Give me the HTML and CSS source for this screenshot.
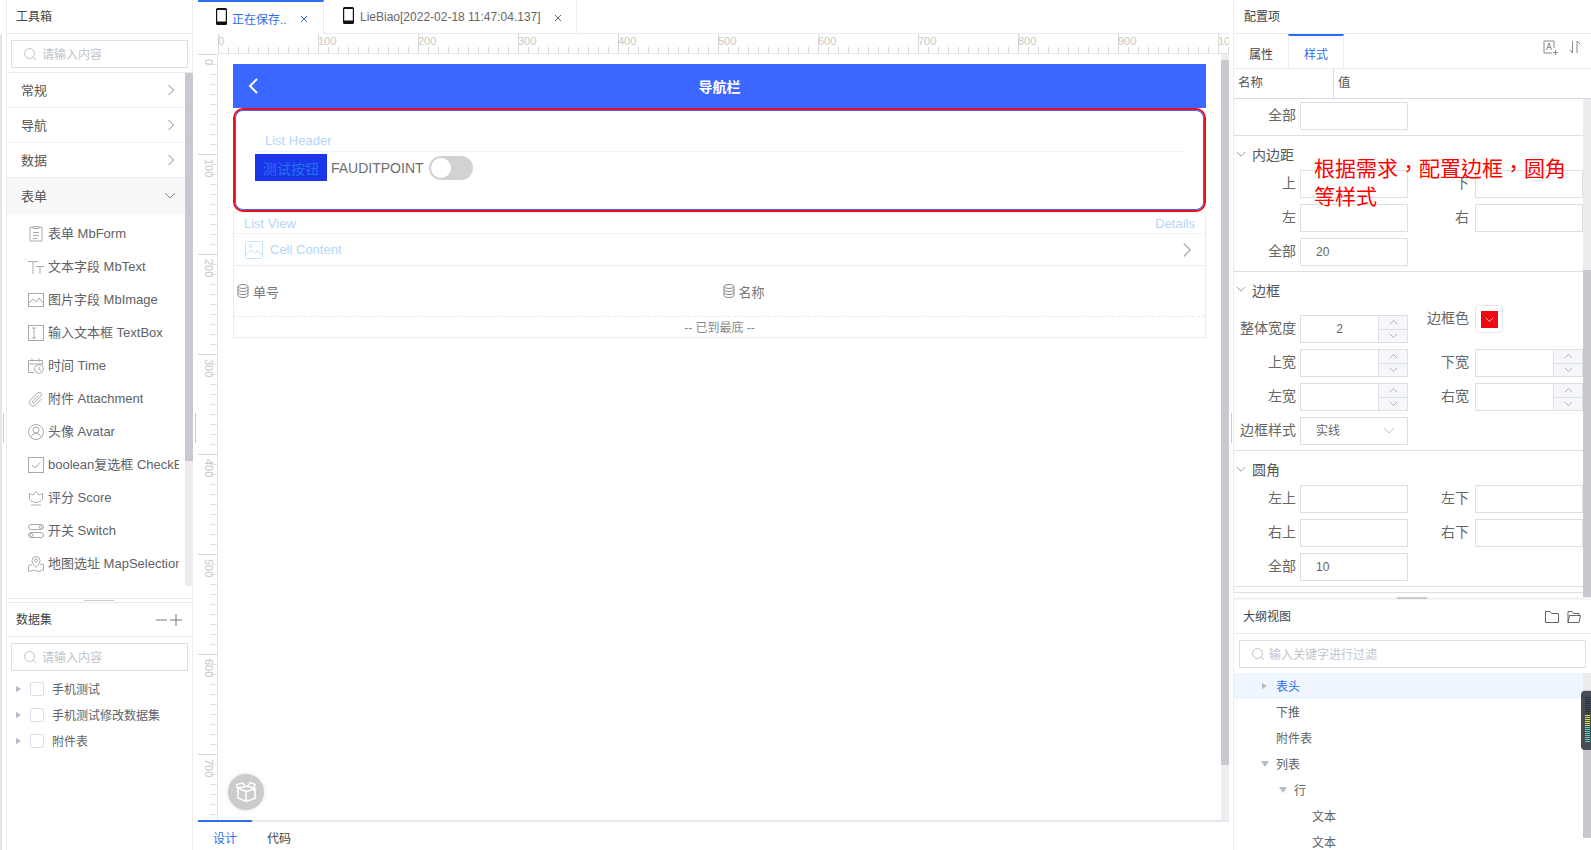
FILE: index.html
```html
<!DOCTYPE html>
<html lang="zh-CN">
<head>
<meta charset="utf-8">
<title>设计器</title>
<link rel="stylesheet" href="styles.css">
</head>
<body>
<svg class="defs" width="0" height="0" aria-hidden="true">
  <symbol id="chev-r" viewBox="0 0 10 14"><path d="M2.500 2l5 5-5 5" fill="none" stroke="currentColor"/></symbol>
  <symbol id="chev-d" viewBox="0 0 12 8"><path d="M1 1l5 5 5-5" fill="none" stroke="currentColor"/></symbol>
  <symbol id="chev-u" viewBox="0 0 12 8"><path d="M1 7l5-5 5 5" fill="none" stroke="currentColor"/></symbol>
  <symbol id="search" viewBox="0 0 14 14"><circle cx="6.500" cy="6.500" r="5" fill="none" stroke="currentColor"/><path d="M10 10l3 3" stroke="currentColor"/></symbol>
  <symbol id="phone" viewBox="0 0 11 17"><path d="M1.500 0h8A1.500 1.500 0 0 1 11 1.500v14A1.500 1.500 0 0 1 9.500 17h-8A1.500 1.500 0 0 1 0 15.500v-14A1.500 1.500 0 0 1 1.500 0zM1.200 2v11.500h8.600V2z" fill="#111" fill-rule="evenodd"/></symbol>
  <symbol id="close" viewBox="0 0 8 8"><path d="M1 1l6 6M7 1l-6 6" stroke="currentColor"/></symbol>
  <symbol id="db" viewBox="0 0 12 14"><g fill="none" stroke="currentColor"><ellipse cx="6" cy="2.500" rx="5" ry="2"/><path d="M1 2.500v9c0 1.100 2.200 2 5 2s5-.9 5-2v-9M1 5.500c0 1.100 2.200 2 5 2s5-.9 5-2M1 8.500c0 1.100 2.200 2 5 2s5-.9 5-2"/></g></symbol>
  <symbol id="i-form" viewBox="0 0 16 16"><g fill="none" stroke="currentColor"><path d="M5 1.500H2v13.500h12V1.500h-3M5 .5h6v2H5z"/><path d="M5 6.500h6M5 9.500h6M5 12.500h4"/></g></symbol>
  <symbol id="i-text" viewBox="0 0 16 16"><g fill="none" stroke="currentColor"><path d="M0 2.500h10M5 2.500V15M8 7.500h8M12 7.500V15"/></g></symbol>
  <symbol id="i-image" viewBox="0 0 16 16"><g fill="none" stroke="currentColor"><rect x=".5" y="1.500" width="15" height="13"/><path d="M1 11l4-4 3 3 3-4 4 5"/></g></symbol>
  <symbol id="i-box" viewBox="0 0 16 16"><g fill="none" stroke="currentColor"><rect x=".5" y=".5" width="15" height="15"/><path d="M4 3h4M4 13h4M6 3v10"/></g></symbol>
  <symbol id="i-time" viewBox="0 0 16 16"><g fill="none" stroke="currentColor"><path d="M6 14.500H.5v-12h14v4M.5 6h14M4 .5v3M11 .5v3"/><circle cx="11" cy="11" r="4.300"/><path d="M11 8.500V11l2 1.500"/></g></symbol>
  <symbol id="i-clip" viewBox="0 0 16 16"><path d="M14 7.500l-6.500 6.500a3.500 3.500 0 0 1-5-5L9.500 2a2.300 2.300 0 0 1 3.300 3.300L6 12a1.100 1.100 0 0 1-1.600-1.600L10.500 4.500" fill="none" stroke="currentColor"/></symbol>
  <symbol id="i-avatar" viewBox="0 0 16 16"><g fill="none" stroke="currentColor"><circle cx="8" cy="8" r="7.500"/><circle cx="8" cy="6" r="3"/><path d="M2.800 13.200c1-2.500 3-3.700 5.200-3.700s4.200 1.200 5.200 3.700"/></g></symbol>
  <symbol id="i-check" viewBox="0 0 16 16"><g fill="none" stroke="currentColor"><rect x=".5" y=".5" width="15" height="15"/><path d="M4 8l3 3 5-5.500"/></g></symbol>
  <symbol id="i-score" viewBox="0 0 16 16"><g fill="none" stroke="currentColor"><path d="M1.500 3.500L5 5l3-3.500L11 5l3.500-1.500v4.500c0 2.500-3 4-6.500 4.500C4.500 12 1.500 10.500 1.500 8zM3 15h10"/></g></symbol>
  <symbol id="i-switch" viewBox="0 0 16 16"><g fill="none" stroke="currentColor"><rect x=".5" y="1.500" width="15" height="5" rx="2.500"/><circle cx="12.500" cy="4" r="1.500"/><rect x=".5" y="9.500" width="15" height="5" rx="2.500"/><circle cx="3.500" cy="12" r="1.500"/></g></symbol>
  <symbol id="i-map" viewBox="0 0 16 16"><g fill="none" stroke="currentColor"><path d="M8 11.500S4 7.800 4 4.500a4 4 0 0 1 8 0c0 3.300-4 7-4 7z"/><circle cx="8" cy="4.500" r="1.500"/><path d="M4 8.500L.5 10v5.500l5-1.500 5 1.500 5-1.500V8.500L12 8"/></g></symbol>
  <symbol id="tri-r" viewBox="0 0 6 8"><path d="M0 0l6 4-6 4z" fill="currentColor"/></symbol>
  <symbol id="tri-d" viewBox="0 0 8 6"><path d="M0 0h8L4 6z" fill="currentColor"/></symbol>
  <symbol id="folder" viewBox="0 0 14 12"><path d="M.5 11.500V.5h4.500l1.500 2h7v9z" fill="none" stroke="currentColor"/></symbol>
  <symbol id="folder-open" viewBox="0 0 14 12"><path d="M1 11.500V.5h4l1.500 2h5.500v2M1 11.500l1.500-7h11l-1.500 7z" fill="none" stroke="currentColor"/></symbol>
</svg>

<div class="app">
  <aside class="left">
    <section class="left-top">
      <header class="pane-head">工具箱</header>
      <div class="search-wrap left-search">
        <div class="search"><svg class="search-ico"><use href="#search"/></svg><span>请输入内容</span></div>
      </div>
      <div class="tool-scroll">
        <div class="tool-list">
          <div class="acc-row"><span>常规</span><svg class="acc-ico"><use href="#chev-r"/></svg></div>
          <div class="acc-row"><span>导航</span><svg class="acc-ico"><use href="#chev-r"/></svg></div>
          <div class="acc-row"><span>数据</span><svg class="acc-ico"><use href="#chev-r"/></svg></div>
          <div class="acc-row acc-open"><span>表单</span><svg class="acc-ico-d"><use href="#chev-d"/></svg></div>
          <div class="tools">
            <div class="tool"><svg class="tool-ico"><use href="#i-form"/></svg><span>表单 MbForm</span></div>
            <div class="tool"><svg class="tool-ico"><use href="#i-text"/></svg><span>文本字段 MbText</span></div>
            <div class="tool"><svg class="tool-ico"><use href="#i-image"/></svg><span>图片字段 MbImage</span></div>
            <div class="tool"><svg class="tool-ico"><use href="#i-box"/></svg><span>输入文本框 TextBox</span></div>
            <div class="tool"><svg class="tool-ico"><use href="#i-time"/></svg><span>时间 Time</span></div>
            <div class="tool"><svg class="tool-ico"><use href="#i-clip"/></svg><span>附件 Attachment</span></div>
            <div class="tool"><svg class="tool-ico"><use href="#i-avatar"/></svg><span>头像 Avatar</span></div>
            <div class="tool"><svg class="tool-ico"><use href="#i-check"/></svg><span>boolean复选框 CheckBox</span></div>
            <div class="tool"><svg class="tool-ico"><use href="#i-score"/></svg><span>评分 Score</span></div>
            <div class="tool"><svg class="tool-ico"><use href="#i-switch"/></svg><span>开关 Switch</span></div>
            <div class="tool"><svg class="tool-ico"><use href="#i-map"/></svg><span>地图选址 MapSelection</span></div>
          </div>
        </div>
        <div class="scrollbar tool-bar"><div class="thumb"></div></div>
      </div>
    </section>
    <div class="splitter"><i></i></div>
    <section class="left-bottom">
      <header class="pane-head data-head"><span>数据集</span><span class="minus-plus"><svg width="26" height="14" viewBox="0 0 26 14"><path d="M0 7h11M14 7h12M20 1v12" stroke="#777" fill="none"/></svg></span></header>
      <div class="search-wrap left-search2">
        <div class="search"><svg class="search-ico"><use href="#search"/></svg><span>请输入内容</span></div>
      </div>
      <ul class="data-tree">
        <li><svg class="tri"><use href="#tri-r"/></svg><i class="cb"></i><span>手机测试</span></li>
        <li><svg class="tri"><use href="#tri-r"/></svg><i class="cb"></i><span>手机测试修改数据集</span></li>
        <li><svg class="tri"><use href="#tri-r"/></svg><i class="cb"></i><span>附件表</span></li>
      </ul>
    </section>
  </aside>

  <main class="center">
    <div class="tabs">
      <div class="tab tab-active"><svg class="phone"><use href="#phone"/></svg><span class="tab-name">正在保存..</span><svg class="tab-x"><use href="#close"/></svg></div>
      <div class="tab tab-two"><svg class="phone"><use href="#phone"/></svg><span class="tab-name">LieBiao[2022-02-18 11:47:04.137]</span><svg class="tab-x"><use href="#close"/></svg></div>
    </div>
    <div class="hruler">
      <span>0</span><span>100</span><span>200</span><span>300</span><span>400</span><span>500</span><span>600</span><span>700</span><span>800</span><span>900</span><span>1000</span>
    </div>
    <div class="stage">
      <div class="vruler">
        <span>0</span><span>100</span><span>200</span><span>300</span><span>400</span><span>500</span><span>600</span><span>700</span>
      </div>
      <div class="canvas">
        <div class="phone-page">
          <div class="navbar">
            <svg class="back" viewBox="0 0 12 18"><path d="M10 2L3 9l7 7" fill="none" stroke="#fff" stroke-width="2"/></svg>
            <b>导航栏</b>
          </div>
          <div class="red-box">
            <div class="list-header">List Header</div>
            <div class="cell-row">
              <button class="test-btn">测试按钮</button>
              <span class="field-name">FAUDITPOINT</span>
              <span class="toggle"><i></i></span>
            </div>
          </div>
          <div class="list-view">
            <div class="lv-head"><span>List View</span><span>Details</span></div>
            <div class="lv-cell">
              <svg class="cell-ico" viewBox="0 0 18 18"><g fill="none" stroke="#c6e1fb"><rect x=".5" y=".5" width="17" height="17" rx="1"/><circle cx="5.500" cy="5" r="1.500"/><path d="M1 14l5-5 4 3 3-2 4 4"/></g></svg>
              <span class="cell-text">Cell Content</span>
              <svg class="cell-chev"><use href="#chev-r"/></svg>
            </div>
            <div class="lv-table">
              <div class="th"><svg class="db"><use href="#db"/></svg><span>单号</span></div>
              <div class="th"><svg class="db"><use href="#db"/></svg><span>名称</span></div>
            </div>
            <div class="lv-end">-- 已到最底 --</div>
          </div>
        </div>
        <button class="fab" aria-label="组件">
          <svg viewBox="0 0 24 24" width="24" height="24"><g fill="none" stroke="#fff" stroke-width="1.500"><path d="M4 8l10-2 7 3-9 2.500z"/><path d="M4 8v10l8 3.500 9-3V9M12 11.500v10"/><path d="M14 6l2-3.500 5 2-1 3.500M4 8L2.500 4.500 9 3l2 3.500"/></g></svg>
        </button>
      </div>
      <div class="scrollbar stage-bar"><div class="thumb"></div></div>
    </div>
    <div class="bottom-tabs">
      <div class="btab btab-active">设计</div>
      <div class="btab">代码</div>
    </div>
  </main>

  <aside class="right">
    <section class="props">
      <header class="pane-head right-head">配置项</header>
      <div class="prop-tabs">
        <div class="ptab">属性</div>
        <div class="ptab ptab-active">样式</div>
        <div class="ptab-tools">
          <svg width="16" height="16" viewBox="0 0 16 16"><g fill="none" stroke="#8a8a8a"><path d="M9 13H1V1h10v7"/><path d="M3.500 10l2.500-7 2.500 7M4.500 7.500h3M12.500 10v5M10 12.500h5"/></g></svg>
          <svg width="12" height="14" viewBox="0 0 12 14"><path d="M3.500 1v12L1 10M8 13V1l3 3" fill="none" stroke="#8a8a8a"/></svg>
        </div>
      </div>
      <div class="prop-head"><div class="ph-name">名称</div><div class="ph-val">值</div></div>
      <div class="prop-scroll">
        <div class="prop-body">
          <div class="sec sec-first">
            <div class="grid">
              <label>全部</label><div class="inp"></div>
            </div>
          </div>
          <div class="sec">
            <div class="sec-head"><svg class="sec-ico"><use href="#chev-d"/></svg>内边距</div>
            <div class="grid">
              <label>上</label><div class="inp"></div><label class="l2">下</label><div class="inp"></div>
              <label>左</label><div class="inp"></div><label class="l2">右</label><div class="inp"></div>
              <label>全部</label><div class="inp">20</div>
            </div>
          </div>
          <div class="sec">
            <div class="sec-head sec-head-tight"><svg class="sec-ico"><use href="#chev-d"/></svg>边框</div>
            <div class="grid">
              <label class="low">整体宽度</label>
              <div class="inp num low"><span class="num-val">2</span><span class="step"><i><svg><use href="#chev-u"/></svg></i><i><svg><use href="#chev-d"/></svg></i></span></div>
              <label class="l2 top">边框色</label>
              <div class="swatch"><i><svg><use href="#chev-d"/></svg></i></div>
              <label>上宽</label>
              <div class="inp num"><span class="num-val"></span><span class="step"><i><svg><use href="#chev-u"/></svg></i><i><svg><use href="#chev-d"/></svg></i></span></div>
              <label class="l2">下宽</label>
              <div class="inp num"><span class="num-val"></span><span class="step"><i><svg><use href="#chev-u"/></svg></i><i><svg><use href="#chev-d"/></svg></i></span></div>
              <label>左宽</label>
              <div class="inp num"><span class="num-val"></span><span class="step"><i><svg><use href="#chev-u"/></svg></i><i><svg><use href="#chev-d"/></svg></i></span></div>
              <label class="l2">右宽</label>
              <div class="inp num"><span class="num-val"></span><span class="step"><i><svg><use href="#chev-u"/></svg></i><i><svg><use href="#chev-d"/></svg></i></span></div>
              <label>边框样式</label>
              <div class="inp sel">实线<svg><use href="#chev-d"/></svg></div>
            </div>
          </div>
          <div class="sec">
            <div class="sec-head"><svg class="sec-ico"><use href="#chev-d"/></svg>圆角</div>
            <div class="grid">
              <label>左上</label><div class="inp"></div><label class="l2">左下</label><div class="inp"></div>
              <label>右上</label><div class="inp"></div><label class="l2">右下</label><div class="inp"></div>
              <label>全部</label><div class="inp">10</div>
            </div>
          </div>
          <div class="sec sec-empty"></div>
        </div>
        <div class="scrollbar prop-bar"><div class="thumb"></div></div>
      </div>
    </section>
    <div class="splitter right-split"><i></i></div>
    <section class="outline">
      <header class="pane-head outline-head"><span>大纲视图</span><span class="outline-tools"><svg width="14" height="12"><use href="#folder"/></svg><svg width="14" height="12"><use href="#folder-open"/></svg></span></header>
      <div class="outline-search">
        <div class="search"><svg class="search-ico"><use href="#search"/></svg><span>输入关键字进行过滤</span></div>
      </div>
      <div class="tree-scroll">
        <ul class="tree">
          <li class="t-sel d1"><svg class="tri"><use href="#tri-r"/></svg>表头</li>
          <li class="d1"><i class="tri-gap"></i>下推</li>
          <li class="d1"><i class="tri-gap"></i>附件表</li>
          <li class="d1"><svg class="tri-down"><use href="#tri-d"/></svg>列表</li>
          <li class="d2"><svg class="tri-down"><use href="#tri-d"/></svg>行</li>
          <li class="d3">文本</li>
          <li class="d3">文本</li>
        </ul>
        <div class="scrollbar tree-bar"><div class="thumb"></div></div>
      </div>
    </section>
  </aside>

  <div class="note" lang="zh-TW">根据需求，配置边框，圆角等样式</div>
  <i class="grip grip-a"></i>
  <i class="grip grip-b"></i>
  <i class="grip grip-c"></i>
  <div class="meter"><i></i></div>
</div>
</body>
</html>
```
FILE: styles.css
```css
* { box-sizing: border-box; }
html, body { margin: 0; padding: 0; background: #fff; }
body {
  font-family: "Liberation Sans", "Noto Sans CJK SC", sans-serif;
  font-size: 12px;
  color: #606266;
  overflow: hidden;
}
ul { list-style: none; margin: 0; padding: 0; }
.defs { position: absolute; }
.app {
  position: relative;
  display: flex;
  width: 1591px;
  height: 850px;
  overflow: hidden;
  padding-left: 6px;
}
.app::before {
  content: "";
  position: absolute;
  left: 0; top: 34px; bottom: 0;
  width: 2px;
  background: #e4e5ea;
}

/* panes */
.pane-head {
  height: 34px;
  padding-left: 9px;
  line-height: 34px;
  color: #444;
  border-bottom: 1px solid #e9ebf0;
}
.left {
  width: 187px;
  height: 850px;
  flex: none;
  border-left: 1px solid #ebedf2;
  border-right: 1px solid #ebedf2;
  display: flex;
  flex-direction: column;
}
.left-top { height: 598px; flex: none; display: flex; flex-direction: column; }
.search-wrap { padding: 6px 4px 0 4px; }
.left-search { height: 39px; border-bottom: 1px solid #e9ebf0; }
.left-search2 { height: 34px; }
.search {
  height: 28px;
  border: 1px solid #dcdfe6;
  display: flex;
  align-items: center;
  padding-left: 11px;
  color: #c0c4cc;
}
.search span { margin-bottom: 2px; }
.search-ico { width: 14px; height: 14px; margin-right: 5px; color: #c0c4cc; }
.tool-scroll { flex: 1; display: flex; min-height: 0; }
.tool-list { width: 178px; flex: none; overflow: hidden; }
.acc-row {
  height: 35px;
  padding: 0 12px 0 14px;
  display: flex;
  align-items: center;
  justify-content: space-between;
  font-size: 13px;
  color: #555;
  border-bottom: 1px solid #eef0f4;
}
.acc-row span { margin-bottom: 2px; }
.acc-open { background: #f8f8f8; border-bottom: 0; height: 36px; }
.acc-ico { width: 10px; height: 14px; color: #888; margin-right: -3px; }
.acc-ico-d { width: 12px; height: 8px; color: #888; margin-right: -3px; }
.tools { padding-top: 3px; }
.tool {
  height: 33px;
  display: flex;
  align-items: center;
  padding: 0 6px 0 21px;
  font-size: 13px;
  color: #606266;
  white-space: nowrap;
  overflow: hidden;
}
.tool-ico { width: 16px; height: 16px; flex: none; margin-right: 4px; color: #aaa; }
.tool span { overflow: hidden; margin-bottom: 2px; }

.scrollbar { width: 8px; flex: none; background: #ececee; }
.thumb { background: #c8c8ce; }
.tool-bar { height: 513px; }
.tool-bar .thumb { height: 388px; }

.splitter {
  height: 5px;
  flex: none;
  position: relative;
  border-top: 1px solid #e9ebf0;
  border-bottom: 1px solid #e9ebf0;
}
.splitter i {
  position: absolute; left: 77px; top: 1px;
  width: 30px; height: 1px; background: #ccc;
}
.left-bottom { flex: 1; }
.data-head { display: flex; justify-content: space-between; padding-right: 10px; }
.minus-plus { display: flex; align-items: center; }
.data-tree { padding-top: 5px; }
.data-tree li {
  height: 26px;
  display: flex;
  align-items: center;
  padding-left: 9px;
}
.data-tree span { margin-bottom: 2px; }
.tri { width: 5px; height: 8px; color: #b8bcc8; flex: none; }
.cb {
  width: 14px; height: 14px;
  border: 1px solid #dcdfe6;
  border-radius: 2px;
  margin: 0 8px 0 9px;
}

/* center */
.center {
  margin-left: 5px;
  width: 1031px;
  flex: none;
  display: flex;
  flex-direction: column;
  height: 850px;
}
.tabs { height: 34px; flex: none; display: flex; border-bottom: 1px solid #e9ebf0; }
.tab {
  height: 34px;
  display: flex;
  align-items: center;
  border-right: 1px solid #e9ebf0;
  padding-left: 18px;
}
.tab-active {
  width: 126px;
  background: #fff;
  border-top: 2px solid #2b6ff0;
  color: #2b6ff0;
}
.tab-two { width: 253px; padding-left: 19px; color: #666; }
.phone { width: 11px; height: 17px; flex: none; margin: -4px 6px 0 0; }
.tab-name { white-space: nowrap; }
.tab-x { width: 8px; height: 8px; color: currentColor; margin-left: 13px; margin-top: 2px; }
.tab-active .phone { margin-right: 5px; }
.tab-active .tab-name { width: 60px; }
.tab-active .tab-x { margin-left: 8px; }

.hruler {
  height: 20px;
  flex: none;
  margin-left: 20px;
  display: flex;
  overflow: hidden;
  border-bottom: 1px solid #e5e5e8;
  background-image:
    repeating-linear-gradient(90deg, #d8d8d8 0 1px, transparent 1px 100px),
    repeating-linear-gradient(90deg, #d8d8d8 0 1px, transparent 1px 10px);
  background-size: 100% 100%, 100% 6px;
  background-position: 0 0, 0 bottom;
  background-repeat: no-repeat;
}
.hruler span {
  width: 100px; flex: none;
  padding: 1px 0 0 0;
  font-size: 11px;
  line-height: 13px;
  color: #c8c8c8;
}
.stage { flex: 1; min-height: 0; display: flex; }
.vruler {
  width: 20px; flex: none;
  overflow: hidden;
  border-right: 1px solid #e5e5e8;
  background-image:
    repeating-linear-gradient(180deg, #d8d8d8 0 1px, transparent 1px 100px),
    repeating-linear-gradient(180deg, #e2e2e2 0 1px, transparent 1px 10px);
  background-size: 100% 100%, 7px 100%;
  background-position: 0 0, right 0;
  background-repeat: no-repeat;
}
.vruler span {
  display: block;
  height: 100px;
  writing-mode: vertical-rl;
  font-size: 11px;
  line-height: 12px;
  padding: 5px 0 0 5px;
  color: #c8c8c8;
}
.canvas {
  flex: 1;
  min-width: 0;
  position: relative;
  padding: 10px 15px 0;
  overflow: hidden;
}
.stage-bar { background: #eeeef0; padding-top: 6px; }
.stage-bar .thumb { height: 705px; }
.navbar {
  height: 44px;
  background: #3b66ff;
  display: flex;
  align-items: center;
  justify-content: center;
  position: relative;
  color: #fff;
  font-size: 14px;
}
.back { position: absolute; left: 14px; top: 13px; width: 12px; height: 18px; }
.red-box {
  height: 104px;
  border: 2px solid #ee0f1b;
  border-radius: 10px;
  box-shadow: inset 0 0 0 1px #3b66ff;
  padding: 20px;
}
.list-header {
  height: 22px;
  padding: 3px 0 0 10px;
  font-size: 13px;
  line-height: 16px;
  color: #b3d6fb;
  border-bottom: 1px solid #edf5fc;
}
.cell-row { display: flex; align-items: center; margin-top: 2px; }
.test-btn {
  width: 72px; height: 27px;
  border: 0; padding: 0;
  background: #1a35ea;
  color: #1f73ea;
  font: inherit;
  font-size: 14px;
  margin-right: 4px;
}
.field-name { font-size: 14px; color: #6e6e6e; margin-right: 5px; }
.toggle {
  width: 44px; height: 24px;
  border-radius: 12px;
  background: #d2d2d2;
  padding: 2px;
  display: block;
}
.toggle i {
  display: block;
  width: 20px; height: 20px;
  border-radius: 50%;
  background: #fff;
}
.list-view {
  height: 126px;
  border: 1px solid #e4eef7;
}
.lv-head {
  height: 21px;
  padding: 0 10px;
  display: flex;
  justify-content: space-between;
  align-items: center;
  font-size: 13px;
  color: #b3d6fb;
  border-bottom: 1px solid #edf5fc;
}
.lv-cell {
  height: 32px;
  display: flex;
  align-items: center;
  padding: 0 14px 0 11px;
  font-size: 13px;
  color: #b3d6fb;
  border-bottom: 1px solid #e4eef7;
}
.cell-ico { width: 18px; height: 18px; margin-right: 7px; }
.cell-text { flex: 1; }
.cell-chev { width: 14px; height: 18px; color: #aaa; margin-right: -3px; }
.lv-table {
  height: 51px;
  display: flex;
  border-bottom: 1px dashed #e8ecf0;
}
.th {
  width: 50%;
  display: flex;
  align-items: center;
  padding-left: 3px;
  font-size: 13px;
  color: #777;
}
.db { width: 12px; height: 14px; margin-right: 4px; color: #888; }
.lv-end { text-align: center; line-height: 22px; color: #888; }
.fab {
  position: absolute;
  left: 10px; top: 720px;
  width: 36px; height: 36px;
  border: 0; padding: 6px;
  border-radius: 50%;
  background: #ccc;
  box-shadow: 0 0 4px rgba(0,0,0,.12);
}
.fab svg { display: block; }
.bottom-tabs {
  height: 30px;
  flex: none;
  display: flex;
  border-top: 2px solid #e4e7ed;
}
.btab {
  width: 54px;
  height: 30px;
  margin-top: -2px;
  padding-top: 9px;
  text-align: center;
  line-height: 20px;
  color: #444;
}
.btab-active { border-top: 2px solid #2b6ff0; color: #2b6ff0; padding-top: 7px; }

/* right */
.right {
  margin-left: 4px;
  width: 358px;
  flex: none;
  height: 850px;
  border-left: 1px solid #ebedf2;
  display: flex;
  flex-direction: column;
}
.props { height: 597px; flex: none; display: flex; flex-direction: column; }
.right-head { padding-left: 10px; }
.prop-tabs { height: 35px; flex: none; display: flex; border-bottom: 1px solid #e9ebf0; }
.ptab {
  width: 54px;
  text-align: center;
  line-height: 42px;
  color: #444;
}
.ptab-active {
  width: 56px;
  color: #2b6ff0;
  border-top: 2px solid #2b6ff0;
  border-left: 1px solid #e9ebf0;
  border-right: 1px solid #e9ebf0;
  line-height: 38px;
}
.ptab-tools {
  margin-left: auto;
  display: flex;
  align-items: flex-start;
  gap: 10px;
  padding: 6px 10px 0 0;
}
.prop-head {
  height: 30px;
  flex: none;
  display: flex;
  line-height: 29px;
  color: #555;
  border-bottom: 1px solid #d8dbe3;
}
.ph-name { width: 100px; padding-left: 4px; border-right: 1px solid #d8dbe3; font-size: 12.5px; }
.ph-val { padding-left: 4px; font-size: 12.5px; }
.prop-scroll { flex: 1; min-height: 0; display: flex; }
.prop-body { width: 349px; flex: none; overflow: hidden; }
.prop-bar .thumb { margin-top: 171px; height: 327px; }
.sec { border-bottom: 1px solid #dcdfe6; padding-bottom: 5px; }
.sec-first { padding-top: 3px; }
.sec-empty { height: 6px; padding: 0; }
.sec-head {
  height: 34px;
  display: flex;
  align-items: center;
  padding: 2px 0 0 2px;
  font-size: 14px;
  color: #555;
}
.sec-head-tight { height: 33px; }
.sec-ico { width: 10px; height: 7px; color: #888; margin-right: 6px; }
.grid {
  display: grid;
  grid-template-columns: 66px 108px 67px 108px;
  row-gap: 6px;
}
.grid label {
  text-align: right;
  padding-right: 4px;
  font-size: 14px;
  line-height: 26px;
  color: #666;
}
.grid label.l2 { padding-right: 6px; }
.grid label.low { margin-top: 10px; }
.grid label.top { margin-top: 0; }
.inp {
  height: 28px;
  border: 1px solid #dcdfe6;
  padding-left: 15px;
  line-height: 26px;
  color: #666;
}
.inp.low { margin-top: 10px; }
.num { display: flex; padding-left: 0; }
.num-val { flex: 1; text-align: center; }
.step {
  width: 29px;
  border-left: 1px solid #dcdfe6;
  display: flex;
  flex-direction: column;
  background: #f5f7fa;
}
.step i {
  flex: 1;
  display: flex;
  align-items: center;
  justify-content: center;
  color: #999;
}
.step i + i { border-top: 1px solid #dcdfe6; }
.step svg { width: 9px; height: 6px; }
.sel { display: flex; align-items: center; justify-content: space-between; padding-right: 12px; }
.sel svg { width: 12px; height: 8px; color: #c0c4cc; }
.swatch {
  width: 28px; height: 28px;
  border: 1px solid #e4e7ed;
  border-radius: 4px;
  padding: 5px;
}
.swatch i {
  display: flex;
  width: 17px; height: 17px;
  background: #ee0a12;
  align-items: center;
  justify-content: center;
  color: #fff;
}
.swatch svg { width: 9px; height: 6px; }

.right-split { height: 3px; background: #f4f4f4; border: 0; }
.right-split i { left: 163px; top: 0; height: 2px; }
.outline { flex: 1; min-height: 0; display: flex; flex-direction: column; }
.outline-head { display: flex; justify-content: space-between; padding-right: 10px; flex: none; line-height: 35px; }
.outline-tools { display: flex; align-items: center; gap: 8px; color: #666; }
.outline-search { height: 39px; flex: none; padding: 6px 5px 0 5px; }
.outline-search .search-ico { margin-right: 4px; }
.tree-scroll { flex: 1; min-height: 0; display: flex; }
.tree { width: 349px; flex: none; }
.tree li {
  height: 26px;
  display: flex;
  align-items: center;
  padding-bottom: 2px;
  color: #606266;
}
.tree li svg { margin-top: 2px; }
.tree .t-sel { background: #eff6ff; color: #2b6ff0; }
.tree .d1 { padding-left: 28px; }
.tree .d2 { padding-left: 46px; }
.tree .d3 { padding-left: 78px; }
.tree .tri { margin-right: 9px; }
.tri-gap { width: 14px; flex: none; }
.tri-down { width: 8px; height: 6px; color: #b8bcc8; margin: 0 7px 0 -1px; }
.tree-bar { height: 165px; }
.tree-bar .thumb { margin-top: 17px; height: 148px; }

/* overlays */
.note {
  position: absolute;
  left: 1314px; top: 153px;
  width: 256px;
  font-family: "Noto Sans CJK TC", "Liberation Sans", sans-serif;
  font-size: 21px;
  line-height: 28px;
  color: #f00;
}
.grip { position: absolute; width: 1px; height: 30px; top: 413px; background: #ccc; }
.grip-a { left: 3px; }
.grip-b { left: 195px; }
.grip-c { left: 1231px; }
.meter {
  position: absolute;
  left: 1581px; top: 691px;
  width: 10px; height: 59px;
  background: #464d56;
  border-radius: 4px 0 0 4px;
  padding: 6px 1px 0 4px;
}
.meter i {
  display: block;
  height: 46px;
  background: repeating-linear-gradient(180deg, transparent 0 1px, rgba(70,77,86,1) 1px 2px),
    linear-gradient(180deg, #2b2f35 0 36%, #d8d84a 36% 66%, #4fd6b0 66% 100%);
}
```
